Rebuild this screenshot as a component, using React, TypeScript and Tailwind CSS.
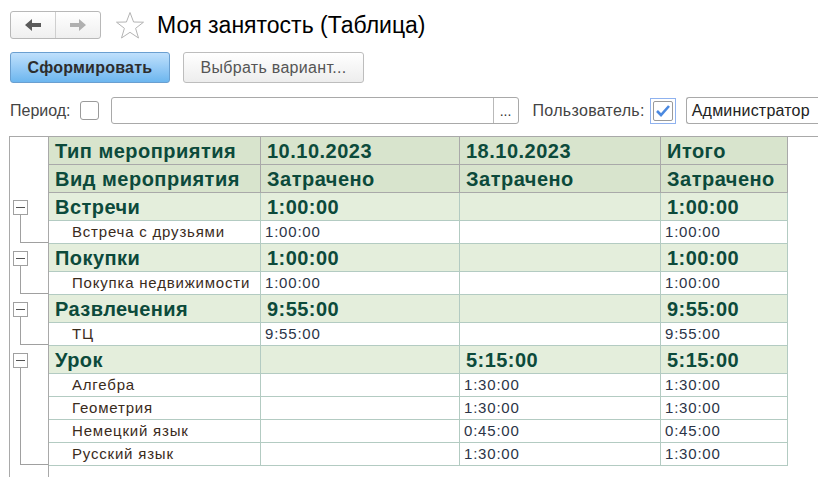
import React from "react";

const F = { fontFamily: '"Liberation Sans", Arial, sans-serif' };

type Group = { name: string; v: [string, string, string]; items: { name: string; v: [string, string, string] }[] };

const groups: Group[] = [
  { name: "Встречи", v: ["1:00:00", "", "1:00:00"], items: [{ name: "Встреча с друзьями", v: ["1:00:00", "", "1:00:00"] }] },
  { name: "Покупки", v: ["1:00:00", "", "1:00:00"], items: [{ name: "Покупка недвижимости", v: ["1:00:00", "", "1:00:00"] }] },
  { name: "Развлечения", v: ["9:55:00", "", "9:55:00"], items: [{ name: "ТЦ", v: ["9:55:00", "", "9:55:00"] }] },
  {
    name: "Урок",
    v: ["", "5:15:00", "5:15:00"],
    items: [
      { name: "Алгебра", v: ["", "1:30:00", "1:30:00"] },
      { name: "Геометрия", v: ["", "1:30:00", "1:30:00"] },
      { name: "Немецкий язык", v: ["", "0:45:00", "0:45:00"] },
      { name: "Русский язык", v: ["", "1:30:00", "1:30:00"] },
    ],
  },
];

const W = ["w-[212px]", "w-[199px]", "w-[201px]", "w-[127px]"];

function HeaderRow({ cells }: { cells: string[] }) {
  return (
    <div className="flex h-[28px]">
      {cells.map((c, i) => (
        <div
          key={i}
          className={`${W[i]} shrink-0 h-full bg-[#d8e4cd] border-r border-b border-[#a9a9a9] pl-[6px] flex items-center text-[20px] tracking-[0.5px] font-bold text-[#0c4a3b] whitespace-nowrap`}
        >
          {c}
        </div>
      ))}
    </div>
  );
}

function GroupRow({ g }: { g: Group }) {
  const cells = [g.name, ...g.v];
  return (
    <div className="flex h-[28px]">
      {cells.map((c, i) => (
        <div
          key={i}
          className={`${W[i]} shrink-0 h-full bg-[#e4eedc] border-r border-b border-[#b3cbc2] pl-[6px] flex items-center text-[20px] tracking-[0.45px] font-bold text-[#0c4a3b] whitespace-nowrap`}
        >
          {c}
        </div>
      ))}
    </div>
  );
}

function DetailRow({ name, v }: { name: string; v: string[] }) {
  const cells = [name, ...v];
  return (
    <div className="flex h-[23px]">
      {cells.map((c, i) => (
        <div
          key={i}
          className={`${W[i]} shrink-0 h-full bg-white border-r border-b border-[#b3cbc2] flex items-center text-[15px] tracking-[0.8px] whitespace-nowrap ${
            i === 0 ? "pl-[23px] text-[#3a2b1c]" : "pl-[4px] text-[#2b3447]"
          }`}
        >
          {c}
        </div>
      ))}
    </div>
  );
}

function Arrow({ dir, color }: { dir: "l" | "r"; color: string }) {
  return (
    <svg width="16" height="12" viewBox="0 0 16 12" className={dir === "r" ? "scale-x-[-1]" : ""}>
      <path d="M0 6 L7 0 L7 4 L16 4 L16 8 L7 8 L7 12 Z" fill={color} />
    </svg>
  );
}

export default function App() {
  return (
    <div className="w-[818px] h-[477px] overflow-hidden bg-white relative" style={F}>
      {/* Title bar */}
      <div className="flex items-center pt-[11px] pl-[10px] h-[39px]">
        <div className="flex h-[28px] w-[91px] rounded-[3px] border border-[#b8b8b8] bg-gradient-to-b from-white to-[#efefef]">
          <div className="w-[45px] flex items-center justify-center border-r border-[#cfcfcf]">
            <Arrow dir="l" color="#5a5a5a" />
          </div>
          <div className="flex-1 flex items-center justify-center">
            <Arrow dir="r" color="#b0b0b0" />
          </div>
        </div>
        <svg width="30" height="29" viewBox="0 0 30 29" className="ml-[14px]">
          <path
            d="M15 1.5 L18.6 11 L28.5 11.2 L20.6 17.3 L23.5 27 L15 21.3 L6.5 27 L9.4 17.3 L1.5 11.2 L11.4 11 Z"
            fill="white"
            stroke="#b4b4b4"
            strokeWidth="1"
            strokeLinejoin="miter"
          />
        </svg>
        <div className="ml-[12px] text-[23px] text-black leading-none">Моя занятость (Таблица)</div>
      </div>

      {/* Buttons */}
      <div className="flex items-center pl-[10px] mt-[13px] gap-[13px]">
        <div className="w-[160px] h-[31px] rounded-[3px] border border-[#6a9fd0] bg-gradient-to-b from-[#bfe0fc] to-[#6cb6ef] flex items-center justify-center text-[16px] tracking-[0.25px] font-bold text-[#2d2d2d]">
          Сформировать
        </div>
        <div className="w-[181px] h-[31px] rounded-[3px] border border-[#bdbdbd] bg-gradient-to-b from-white to-[#ededed] flex items-center justify-center text-[16px] tracking-[0.3px] text-[#555]">
          Выбрать вариант...
        </div>
      </div>

      {/* Filters */}
      <div className="flex items-center pl-[10px] mt-[14px] h-[27px]">
        <span className="text-[16px] text-[#444]">Период:</span>
        <div className="ml-[9px] w-[19px] h-[19px] rounded-[3px] border border-[#9a9a9a] bg-white" />
        <div className="ml-[12px] w-[408px] h-[27px] rounded-[3px] border border-[#a9a9a9] flex">
          <div className="flex-1" />
          <div className="w-[25px] border-l border-[#b9b9b9] flex items-end justify-center pb-[5px] text-[14px] text-[#333] leading-none">
            ...
          </div>
        </div>
        <span className="ml-[14px] text-[16px] tracking-[0.3px] text-[#444]">Пользователь:</span>
        <div className="ml-[5px] w-[26px] h-[26px] border border-[#8fb2ef] flex items-center justify-center">
          <div className="w-[20px] h-[20px] rounded-[2px] border border-[#9a9a9a] bg-white flex items-center justify-center">
            <svg width="16" height="14" viewBox="0 0 16 14">
              <path d="M2 7 L6 11 L14 2" fill="none" stroke="#4b89e0" strokeWidth="2.6" />
            </svg>
          </div>
        </div>
        <div className="ml-[10px] flex-1 h-[27px] rounded-l-[3px] border border-r-0 border-[#a9a9a9] flex items-center pl-[5px] text-[16px] tracking-[0.2px] text-[#222]">
          Администратор
        </div>
      </div>

      {/* Table */}
      <div className="mt-[12px] ml-[9px] border-t border-[#a9a9a9] flex h-[400px]">
        <div className="flex flex-col">
          {/* header */}
          <div className="flex">
            <div className="w-[40px] shrink-0 border-l border-r border-[#a9a9a9]" />
            <div>
              <HeaderRow cells={["Тип мероприятия", "10.10.2023", "18.10.2023", "Итого"]} />
              <HeaderRow cells={["Вид мероприятия", "Затрачено", "Затрачено", "Затрачено"]} />
            </div>
          </div>
          {groups.map((g) => (
            <div key={g.name} className="flex">
              <div className="w-[40px] shrink-0 border-l border-r border-[#a9a9a9] relative">
                <div className="absolute left-[3px] top-[7px] w-[15px] h-[15px] border border-[#a0a0a0] bg-white flex items-center justify-center">
                  <div className="w-[9px] h-[1px] bg-[#555]" />
                </div>
                <div className="absolute left-[10px] top-[22px] bottom-[1px] w-[1px] bg-[#a0a0a0]" />
                <div className="absolute left-[10px] right-0 bottom-[1px] h-[1px] bg-[#a0a0a0]" />
              </div>
              <div>
                <GroupRow g={g} />
                {g.items.map((it) => (
                  <DetailRow key={it.name} name={it.name} v={it.v} />
                ))}
              </div>
            </div>
          ))}
          <div className="flex flex-1">
            <div className="w-[40px] shrink-0 border-l border-r border-[#a9a9a9]" />
          </div>
        </div>
      </div>
    </div>
  );
}
